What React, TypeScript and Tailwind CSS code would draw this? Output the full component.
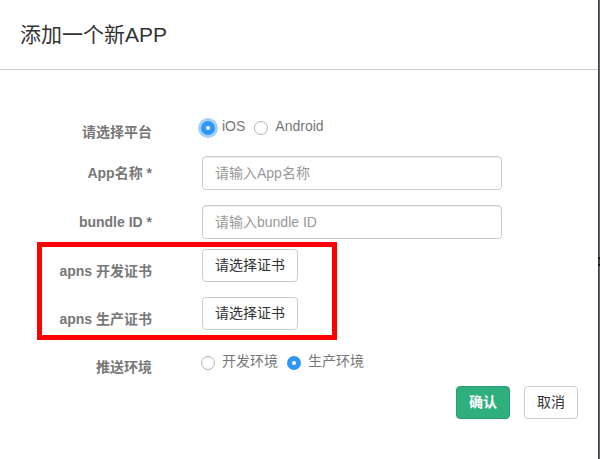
import { useState } from "react";
import type { ReactNode } from "react";

const radioClass =
  "size-[14px] shrink-0 appearance-none rounded-full border border-[#b5b5b5] bg-white checked:border-[5px] checked:border-[#2f96f3]";
const inputClass =
  "h-[34px] w-[300px] rounded border border-[#cccccc] bg-white px-3 text-sm text-[#555555] shadow-[inset_0_1px_1px_rgba(0,0,0,0.075)] outline-none placeholder:text-[#999999]";
const buttonClass =
  "h-[33px] rounded border border-[#cccccc] bg-white px-3 pb-0.5 text-sm leading-5 text-[#333333]";
const labelClass = "w-[152px] shrink-0 text-right text-sm leading-5 font-bold text-[#777777]";

function Radio({
  name,
  label,
  checked,
  ring,
  onChange,
}: {
  name: string;
  label: string;
  checked: boolean;
  ring?: boolean;
  onChange: () => void;
}) {
  return (
    <label className="flex items-start gap-[7px] text-sm leading-5 text-[#777777]">
      <input
        type="radio"
        name={name}
        checked={checked}
        onChange={onChange}
        className={`${radioClass} mt-[5px] ${ring ? "checked:shadow-[0_0_0_3px_#a3d0fa]" : ""}`}
      />
      {label}
    </label>
  );
}

function RadioRow({ title, children }: { title: string; children: ReactNode }) {
  return (
    <div role="radiogroup" aria-label={title} className="flex items-start gap-[49px]">
      <span className={`${labelClass} pt-1.5`}>{title}</span>
      <div className="flex gap-[9px]">{children}</div>
    </div>
  );
}

function TextRow({ id, title, placeholder }: { id: string; title: string; placeholder: string }) {
  return (
    <div className="flex items-center gap-[50px]">
      <label htmlFor={id} className={labelClass}>{title}</label>
      <input id={id} type="text" placeholder={placeholder} className={inputClass} />
    </div>
  );
}

function CertificateRow({ id, title }: { id: string; title: string }) {
  return (
    <div className="flex h-[33px] items-start gap-[50px]">
      <span id={id} className={`${labelClass} pt-3`}>{title}</span>
      <button type="button" aria-describedby={id} className={buttonClass}>请选择证书</button>
    </div>
  );
}

export default function App() {
  const [platform, setPlatform] = useState("ios");
  const [environment, setEnvironment] = useState("production");

  return (
    <div className="flex min-h-screen bg-white font-['Liberation_Sans','Noto_Sans_CJK_SC',sans-serif]">
      <main className="min-w-0 grow">
        <header className="border-b border-[#cccccc] px-5 pt-5 pb-5">
          <h1 className="text-[21px] leading-[29px] text-[#333333]">添加一个新APP</h1>
        </header>
        <form className="pt-[46px]" onSubmit={(e) => e.preventDefault()}>
          <RadioRow title="请选择平台">
            <Radio name="platform" label="iOS" ring checked={platform === "ios"} onChange={() => setPlatform("ios")} />
            <Radio name="platform" label="Android" checked={platform === "android"} onChange={() => setPlatform("android")} />
          </RadioRow>
          <div className="flex flex-col gap-[15px] pt-[14px]">
            <TextRow id="app-name" title="App名称 *" placeholder="请输入App名称" />
            <TextRow id="bundle-id" title="bundle ID *" placeholder="请输入bundle ID" />
          </div>
          <div className="relative mt-[10px] flex flex-col gap-[15px]">
            <CertificateRow id="development-certificate" title="apns 开发证书" />
            <CertificateRow id="production-certificate" title="apns 生产证书" />
            <div className="pointer-events-none absolute -top-[7px] -bottom-[10px] left-[37px] w-[300px] border-[5px] border-[#ff0000]" />
          </div>
          <div className="pt-[21px]">
            <RadioRow title="推送环境">
              <Radio name="environment" label="开发环境" checked={environment === "development"} onChange={() => setEnvironment("development")} />
              <Radio name="environment" label="生产环境" checked={environment === "production"} onChange={() => setEnvironment("production")} />
            </RadioRow>
          </div>
          <div className="flex justify-end gap-[14px] pt-[9px] pr-5">
            <button type="submit" className="h-[33px] rounded border border-[#29a071] bg-[#2eaf7d] px-3 pb-0.5 text-sm leading-5 font-bold text-white">确认</button>
            <button type="button" className={buttonClass}>取消</button>
          </div>
        </form>
      </main>
      <div className="w-[2px] shrink-0 border-l border-[#3f4143] bg-[#66696b] pt-[257px]">
        <svg aria-hidden="true" viewBox="0 0 2 9" className="-ml-px block h-[9px] w-[2px]">
          <rect width="2" height="2" fill="#15171a" />
          <rect y="2" width="2" height="5" fill="#4d4037" />
          <rect y="7" width="2" height="2" fill="#15171a" />
        </svg>
      </div>
    </div>
  );
}
